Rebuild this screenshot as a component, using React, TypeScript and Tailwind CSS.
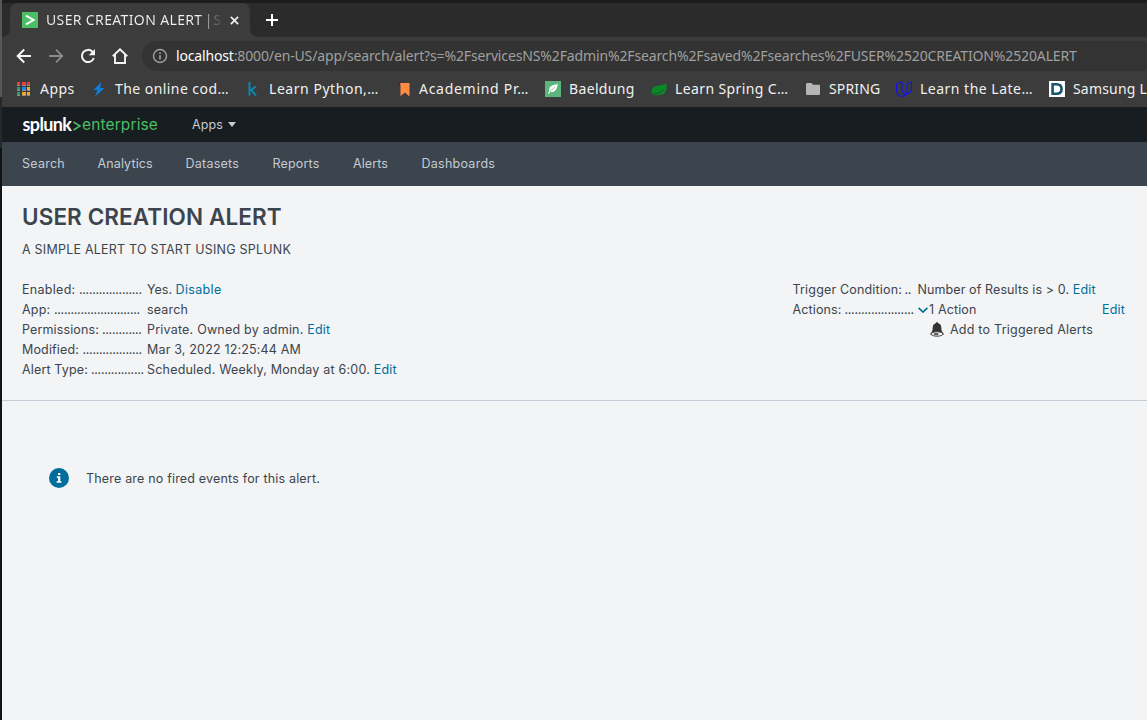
import type { ReactNode } from "react";

const bookmarks: { label: string; box: string; text: string; icon: ReactNode }[] = [
  {
    label: "Apps",
    box: "w-[75px]",
    text: "tracking-[0.45px]",
    icon: (
      <svg viewBox="0 0 16 16" className="size-4" shapeRendering="crispEdges">
        <path fill="#f23a3a" d="M1 1h3v3H1zM6 1h4v3H6zM11 1h3v3h-3z" />
        <path fill="#27a35c" d="M1 6h3v3H1zM1 11h3v3H1z" />
        <path fill="#1a8cf0" d="M6 6h4v3H6z" />
        <path fill="#f9a825" d="M11 6h3v3h-3zM6 11h4v3H6zM11 11h3v3h-3z" />
        <path fill="#8f8f8f" d="M1 4h3v1H1zM6 4h4v1H6zM11 4h3v1h-3zM1 9h3v1H1zM6 9h4v1H6zM11 9h3v1h-3zM1 14h3v1H1zM6 14h4v1H6zM11 14h3v1h-3z" />
      </svg>
    ),
  },
  {
    label: "The online cod…",
    box: "w-[154px]",
    text: "tracking-[0.44px]",
    icon: (
      <svg viewBox="0 0 16 16" className="size-4">
        <path fill="#0a7fe0" d="M10.5 1 2.5 9h4L4 15.500l9.500-8.500H9z" />
      </svg>
    ),
  },
  {
    label: "Learn Python,…",
    box: "w-[150px]",
    text: "tracking-[0.54px]",
    icon: (
      <svg viewBox="0 0 16 16" className="size-4" fill="none" stroke="#0e86b0" strokeWidth="2">
        <path d="M4.500 1v13.500M10.800 5.500 5.500 9.500M6.200 9l4.800 5.500" />
      </svg>
    ),
  },
  {
    label: "Academind Pr…",
    box: "w-[150px]",
    text: "tracking-[0.71px]",
    icon: (
      <svg viewBox="0 0 16 16" className="size-4">
        <path fill="#521751" d="M2 3 3.500 1.500h3V4z" />
        <path fill="#ff8c42" d="M5 2h9.500v13.500L10 11.500l-4.500 3.500V4z" />
      </svg>
    ),
  },
  {
    label: "Baeldung",
    box: "w-[106px]",
    text: "tracking-[0.35px]",
    icon: (
      <svg viewBox="0 0 16 16" className="size-4">
        <path fill="#5cb57c" d="M0 0h16v16H0z" />
        <path fill="#fff" d="M12.800 3C8 4 3.500 5 4.300 9.500L3 12.800h1l1.200-2C10 12 12 8 12.800 3z" />
        <path d="M5 10.500 10 6" stroke="#5cb57c" strokeWidth=".7" />
      </svg>
    ),
  },
  {
    label: "Learn Spring C…",
    box: "w-[154px]",
    text: "tracking-[0.39px]",
    icon: (
      <svg viewBox="0 0 16 16" className="size-4">
        <path fill="#068a25" d="M15 1.800C17 9 14.500 14.500 7 14.200c-2 0-4-.2-5.500-.7C-.5 10 .5 6 5.500 5 9 4.500 12.500 4.500 15 1.800z" />
        <path d="M2 12.800c4 .2 8-1.300 10.500-4.300" stroke="#3c3c3c" strokeWidth=".9" fill="none" />
      </svg>
    ),
  },
  {
    label: "SPRING",
    box: "w-[91px]",
    text: "tracking-[0.17px]",
    icon: (
      <svg viewBox="0 0 16 16" className="size-4">
        <path fill="#b5b5b5" d="M2.300 2h4.200L8 3.700h5.700c.7 0 1.300.5 1.300 1.200v7.800c0 .7-.6 1.300-1.300 1.300H2.300C1.600 14 1 13.400 1 12.700V3.300C1 2.600 1.600 2 2.300 2z" />
      </svg>
    ),
  },
  {
    label: "Learn the Late…",
    box: "w-[153px]",
    text: "tracking-[0.49px]",
    icon: (
      <svg viewBox="0 0 16 16" className="size-4" fill="none" stroke="#1212f0" strokeWidth="1.100">
        <path d="M5.500.8.600 3v6c0 4 2.400 6.300 5.500 6.300 2 0 3.400-.8 4.400-2.200 3-.6 4.900-2.800 4.900-5.800V.8L11 3v6.500c0 1.500-.1 2.600-.7 3.600C7.500 12.800 6 11 6 8.300V.8" />
      </svg>
    ),
  },
  {
    label: "Samsung L",
    box: "w-[98px]",
    text: "tracking-[0.2px]",
    icon: (
      <svg viewBox="0 0 16 16" className="size-4">
        <path fill="#fff" d="M0 0h16v16H0z" />
        <path fill="none" stroke="#17546f" strokeWidth="2.600" d="M3.600 3.200h4c3.500 0 5 2 5 4.800s-1.500 4.800-5 4.800h-4z" />
      </svg>
    ),
  },
];

const nav = [
  { label: "Search", cls: "w-[75.5px] tracking-[0.25px]" },
  { label: "Analytics", cls: "w-[88px] tracking-[0.12px]" },
  { label: "Datasets", cls: "w-[87px] tracking-[0.25px]" },
  { label: "Reports", cls: "w-[80.5px] tracking-[0.18px]" },
  { label: "Alerts", cls: "w-[68.5px] tracking-[0.1px]" },
  { label: "Dashboards", cls: "tracking-[0.26px]" },
];

function Term({ label, labelClass, dots }: { label: string; labelClass: string; dots: number }) {
  return (
    <dt className="flex w-[125px] shrink-0">
      <span className={`shrink-0 ${labelClass}`}>{label}</span>
      <span className="tracking-[-0.3px]">{".".repeat(dots)}</span>
    </dt>
  );
}

function Link({ children, className = "tracking-[0.18px]" }: { children: ReactNode; className?: string }) {
  return (
    <a href="#" className={`text-[#006d9c] ${className}`}>
      {children}
    </a>
  );
}

function BrowserChrome() {
  return (
    <header className="h-[107px] shrink-0 bg-[#3c3c3c] font-['Noto_Sans',sans-serif] text-sm text-[#f0f0f0]">
      <div className="h-[3px] bg-[#1c1c1c]" />
      <div className="flex h-[34px] bg-[#2b2b2b]">
        <div className="w-2 bg-[#3c3c3c]">
          <div className="size-full rounded-br-lg bg-[#2b2b2b]" />
        </div>
        <div className="flex w-60 items-center rounded-t-lg bg-[#3c3c3c] pl-3">
          <svg viewBox="0 0 16 16" className="size-4 shrink-0">
            <path fill="#4bbf63" d="M0 0h16v16H0z" />
            <path d="M4 3.700 11.500 8 4 12.300" fill="none" stroke="#fff" strokeWidth="2" />
          </svg>
          <div className="ml-2 w-[177px] bg-linear-to-r from-[#f0f0f0] from-86% to-[#3c3c3c] bg-clip-text whitespace-nowrap text-transparent">
            <span className="tracking-[0.36px]">USER CREATION ALERT</span>
            <span className="tracking-[-1.300px]"> | S</span>
          </div>
          <svg viewBox="0 0 10 10" className="ml-[7px] size-[9px] shrink-0" stroke="#f0f0f0" strokeWidth="1.900">
            <path d="m1 1 8 8M9 1 1 9" />
          </svg>
        </div>
        <div className="w-2 bg-[#3c3c3c]">
          <div className="size-full rounded-bl-lg bg-[#2b2b2b]" />
        </div>
        <svg viewBox="0 0 12 12" className="mt-[11px] ml-2 size-3" stroke="#fff" strokeWidth="2">
          <path d="M6 0v12M0 6h12" />
        </svg>
      </div>

      <div className="flex h-[38px] items-center">
        <svg viewBox="0 0 16 16" className="ml-[14px] size-4 shrink-0" fill="none" stroke="#f5f5f5" strokeWidth="2">
          <path d="M15 8H2.200M8.200 1.500 1.700 8l6.500 6.500" />
        </svg>
        <svg viewBox="0 0 16 16" className="ml-4 size-4 shrink-0" fill="none" stroke="#8a8a8a" strokeWidth="1.800">
          <path d="M1 8h12.800M8 1.700 14.300 8 8 14.300" />
        </svg>
        <svg viewBox="0 0 16 16" className="ml-4 size-4 shrink-0" fill="none" stroke="#f5f5f5" strokeWidth="2">
          <path d="M13.800 10A6.100 6.100 0 1 1 12.500 3.800L14 5.500" />
          <path fill="#f5f5f5" stroke="none" d="M15 1v6.300H8.700z" />
        </svg>
        <svg viewBox="0 0 16 16" className="ml-4 size-4 shrink-0" fill="none" stroke="#f5f5f5" strokeWidth="1.900">
          <path d="M.8 8.300 8 1.400l7.200 6.900M3 7v8h10V7" />
        </svg>
        <div className="ml-3.5 flex h-[30px] grow items-center rounded-l-full bg-[#333333] pl-2.5">
          <svg viewBox="0 0 16 16" className="size-4 shrink-0" fill="none" stroke="#a0a0a0" strokeWidth="1.400">
            <circle cx="8" cy="8" r="6.500" />
            <path d="M8 7.200v4.300M8 4.400v1.700" strokeWidth="1.700" />
          </svg>
          <div className="ml-2 whitespace-nowrap">
            <span className="tracking-[-0.16px] text-white">localhost</span>
            <span className="tracking-[-0.138px] text-[#a0a0a0]">
              :8000/en-US/app/search/alert?s=%2FservicesNS%2Fadmin%2Fsearch%2Fsaved%2Fsearches%2FUSER%2520CREATION%2520ALERT
            </span>
          </div>
        </div>
      </div>

      <div className="flex h-7 items-center overflow-hidden pl-3.5">
        {bookmarks.map((b) => (
          <div key={b.label} className={`flex shrink-0 items-center gap-2 ${b.box}`}>
            {b.icon}
            <span className={`whitespace-nowrap ${b.text}`}>{b.label}</span>
          </div>
        ))}
      </div>
    </header>
  );
}

export default function App() {
  return (
    <div className="flex h-[720px] w-full overflow-hidden bg-[#f2f4f5] font-['Inter',sans-serif] text-[12.5px] leading-5 text-[#3c444d]">
      <div className="flex w-[2px] shrink-0 flex-col bg-[#131313]">
        <div className="h-[97px] bg-[#55585b]" />
        <div className="h-[51px] bg-[#26282a]" />
      </div>
      <div className="flex min-w-0 grow flex-col">
        <BrowserChrome />

        <div className="flex h-[35px] shrink-0 items-center bg-[#171d21] pl-5">
          <div className="flex w-[170px] items-center leading-6">
            <span className="mb-0.5 w-[50.5px] pl-[0.5px] font-['Lato',sans-serif] text-[18px] font-bold tracking-[-0.62px] text-white">splunk</span>
            <svg viewBox="0 0 8 10" className="mt-0.5 h-2.5 w-[8px]" fill="none" stroke="#4bbf63" strokeWidth="1.500">
              <path d="m.5 1 6.500 4-6.500 4" />
            </svg>
            <span className="ml-[1.500px] text-[15.5px] tracking-[0.12px] text-[#4bbf63]">enterprise</span>
          </div>
          <span className="tracking-[0.12px] text-[#c3cbd4]">Apps</span>
          <svg viewBox="0 0 8 5" className="ml-[5px] h-[5px] w-2" fill="#c3cbd4">
            <path d="M0 0h8L4 5z" />
          </svg>
        </div>

        <nav className="flex h-11 shrink-0 items-center bg-[#3c444d] pl-5 text-[#c3cbd4]">
          {nav.map((n) => (
            <a key={n.label} href="#" className={n.cls}>
              {n.label}
            </a>
          ))}
        </nav>

        <section className="h-[215px] shrink-0 border-b border-[#c3cbd4] px-5 pt-[17px]">
          <h1 className="text-[22.5px] leading-7 font-semibold tracking-[0.1px]">USER CREATION ALERT</h1>
          <p className="mt-[9px] tracking-[0.225px]">A SIMPLE ALERT TO START USING SPLUNK</p>

          <div className="mt-5 flex justify-between whitespace-nowrap">
            <dl className="w-[500px]">
              <div className="flex">
                <Term label="Enabled:" labelClass="w-[57px] tracking-[0.29px]" dots={19} />
                <dd><span className="tracking-[0px]">Yes. </span><Link className="tracking-[0.34px]">Disable</Link></dd>
              </div>
              <div className="flex">
                <Term label="App:" labelClass="w-[32px] tracking-[0.2px]" dots={26} />
                <dd className="tracking-[0.16px]">search</dd>
              </div>
              <div className="flex">
                <Term label="Permissions:" labelClass="w-[80px] tracking-[0.13px]" dots={12} />
                <dd><span className="tracking-[0.21px]">Private. Owned by admin. </span><Link>Edit</Link></dd>
              </div>
              <div className="flex">
                <Term label="Modified:" labelClass="w-[60.5px] tracking-[0.15px]" dots={18} />
                <dd className="tracking-[0.17px]">Mar 3, 2022 12:25:44 AM</dd>
              </div>
              <div className="flex">
                <Term label="Alert Type:" labelClass="w-[69px] tracking-[0.15px]" dots={16} />
                <dd><span className="tracking-[0.205px]">Scheduled. Weekly, Monday at 6:00. </span><Link>Edit</Link></dd>
              </div>
            </dl>

            <dl className="mr-[0.5px] w-[334px]">
              <div className="flex">
                <Term label="Trigger Condition:" labelClass="w-[112px] tracking-[0.17px]" dots={2} />
                <dd><span className="tracking-[0.1px]">Number of Results is &gt; 0. </span><Link>Edit</Link></dd>
              </div>
              <div className="flex">
                <Term label="Actions:" labelClass="w-[52px] tracking-[0.13px]" dots={21} />
                <dd className="flex grow items-center pr-[1.500px]">
                  <svg viewBox="0 0 10 6" className="h-1.5 w-2.5" fill="none" stroke="#006d9c" strokeWidth="1.700">
                    <path d="m.6.8 4.400 4.200L9.400.8" />
                  </svg>
                  <span className="ml-[1.500px] grow tracking-[0.14px]">1 Action</span>
                  <Link>Edit</Link>
                </dd>
              </div>
              <div className="flex items-center pl-[137px]">
                <svg viewBox="0 0 14 15" className="mb-px h-[15px] w-3.5">
                  <path fill="#333" d="M7 .3c.8 0 1.200.5 1.300 1 2 .6 3 2.200 3 4.500 0 2.700.6 4.200 2.200 5.700v1.200H.5v-1.200C2.100 10 2.700 8.500 2.700 5.800c0-2.300 1-3.900 3-4.500.1-.5.500-1 1.300-1z" />
                  <ellipse cx="7" cy="12" rx="6" ry="2.200" fill="#f2f4f5" stroke="#444" strokeWidth="1" />
                  <ellipse cx="6.200" cy="12.100" rx="2.500" ry="1.200" fill="#555" />
                </svg>
                <span className="ml-[6.500px] tracking-[0.23px]">Add to Triggered Alerts</span>
              </div>
            </dl>
          </div>
        </section>

        <div className="flex items-start pt-[67px] pl-[47px]">
          <svg viewBox="0 0 20 20" className="size-5">
            <circle cx="10" cy="10" r="10" fill="#006d9c" />
            <path fill="#fff" d="M9 5h2.300v2H9zM7.800 8.200h3.500v5h1.200v1.600H7.600v-1.600H9V9.800H7.800z" />
          </svg>
          <span className="mt-px ml-[17px] tracking-[0.183px]">There are no fired events for this alert.</span>
        </div>
      </div>
    </div>
  );
}
